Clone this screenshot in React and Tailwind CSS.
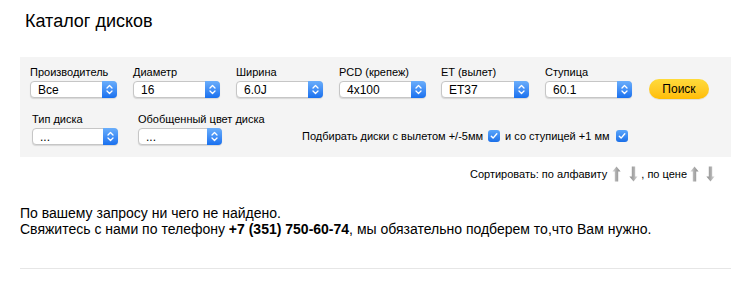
import React from "react";

const font = { fontFamily: '"Liberation Sans", Arial, sans-serif' };

// macOS-like select with blue stepper
const Select = ({ value, className }) => (
  <div className={`flex h-[17px] items-stretch rounded-[4px] border border-[#c6c6c6] bg-white shadow-[0_1px_1px_rgba(0,0,0,0.12)] ${className}`}>
    <div className="flex flex-1 items-center pl-[7px] text-[12px] leading-none text-black">{value}</div>
    <div className="-my-px -mr-px flex w-[15px] items-center justify-center rounded-r-[4px] bg-gradient-to-b from-[#6aaefb] to-[#1770ef]">
      <svg width="7" height="11" viewBox="0 0 7 11" fill="none" stroke="white" strokeWidth="1.3" strokeLinecap="round" strokeLinejoin="round">
        <path d="M1 4l2.5-2.5L6 4" />
        <path d="M1 7l2.5 2.5L6 7" />
      </svg>
    </div>
  </div>
);

const Field = ({ label, value, w = "w-[87px]", className = "" }) => (
  <div className={`flex flex-col ${w} ${className}`}>
    <span className="text-[11px] leading-[13px] text-black whitespace-nowrap">{label}</span>
    <Select value={value} className="mt-[2px] w-full" />
  </div>
);

const Check = () => (
  <span className="inline-flex h-[12px] w-[12px] items-center justify-center rounded-[3px] bg-gradient-to-b from-[#5aa6fb] to-[#1a6fe8]">
    <svg width="8" height="8" viewBox="0 0 8 8" fill="none" stroke="white" strokeWidth="1.4" strokeLinecap="round" strokeLinejoin="round">
      <path d="M1.3 4.2l1.8 1.9L6.8 1.7" />
    </svg>
  </span>
);

const Arrow = ({ down }) => (
  <svg width="9" height="16" viewBox="0 0 9 16" className={down ? "rotate-180" : ""}>
    <defs>
      <linearGradient id="ag" x1="0" y1="0" x2="1" y2="0">
        <stop offset="0" stopColor="#dadada" />
        <stop offset="0.5" stopColor="#aaaaaa" />
        <stop offset="1" stopColor="#8a8a8a" />
      </linearGradient>
    </defs>
    <path d="M4.5 0.5L8.6 5.5H6.2V15.5H2.8V5.5H0.4Z" fill="url(#ag)" />
  </svg>
);

export default function App() {
  return (
    <div className="w-[741px] h-[288px] bg-white pl-5 pr-[10px]" style={font}>
      <h1 className="pl-[5px] pt-[10px] text-[18px] leading-[22px] text-black">Каталог дисков</h1>

      {/* filter panel */}
      <div className="mt-[25px] bg-[#f4f4f4] pl-[10px] pr-4 pt-[9px] pb-[12px]">
        <div className="flex items-end gap-4">
          <Field label="Производитель" value="Все" />
          <Field label="Диаметр" value="16" />
          <Field label="Ширина" value="6.0J" />
          <Field label="PCD (крепеж)" value="4x100" />
          <Field label="ET (вылет)" value="ET37" w="w-[88px]" className="-ml-px" />
          <Field label="Ступица" value="60.1" w="w-[87px]" />
          <button className="ml-px mb-[-1px] h-[20px] w-[60px] rounded-full bg-gradient-to-b from-[#ffdb3a] to-[#ffbd00] text-[12px] leading-none text-black shadow-[0_1px_0_rgba(0,0,0,0.08)]">
            Поиск
          </button>
        </div>
        <div className="mt-[15px] flex items-end">
          <Field label="Тип диска" value="..." w="w-[86px]" className="ml-[2px]" />
          <Field label="Обобщенный цвет диска" value="..." w="w-[84px]" className="ml-[20px]" />
          <div className="ml-[80px] mb-[2px] flex items-center text-[11px] leading-[13px] text-black whitespace-nowrap">
            <span>Подбирать диски с вылетом +/-5мм</span>
            <span className="ml-[5px]"><Check /></span>
            <span className="ml-[5px]">и со ступицей +1 мм</span>
            <span className="ml-[6px]"><Check /></span>
          </div>
        </div>
      </div>

      {/* sort */}
      <div className="mt-[9px] flex items-center justify-end pr-[16px] text-[11px] leading-[13px] text-black">
        <span>Сортировать: по алфавиту</span>
        <span className="ml-[5px] flex"><Arrow /></span>
        <span className="ml-[8px] flex"><Arrow down /></span>
        <span className="ml-[3px]">, по цене</span>
        <span className="ml-[3px] flex"><Arrow /></span>
        <span className="ml-[7px] flex"><Arrow down /></span>
      </div>

      {/* result */}
      <div className="mt-[23px] text-[14px] leading-[16px] text-black">
        <p>По вашему запросу ни чего не найдено.</p>
        <p>
          Свяжитесь с нами по телефону <b>+7 (351) 750-60-74</b>, мы обязательно подберем то,что Вам нужно.
        </p>
      </div>

      <div className="mt-[31px] h-px bg-[#e6e6e6]" />
    </div>
  );
}
